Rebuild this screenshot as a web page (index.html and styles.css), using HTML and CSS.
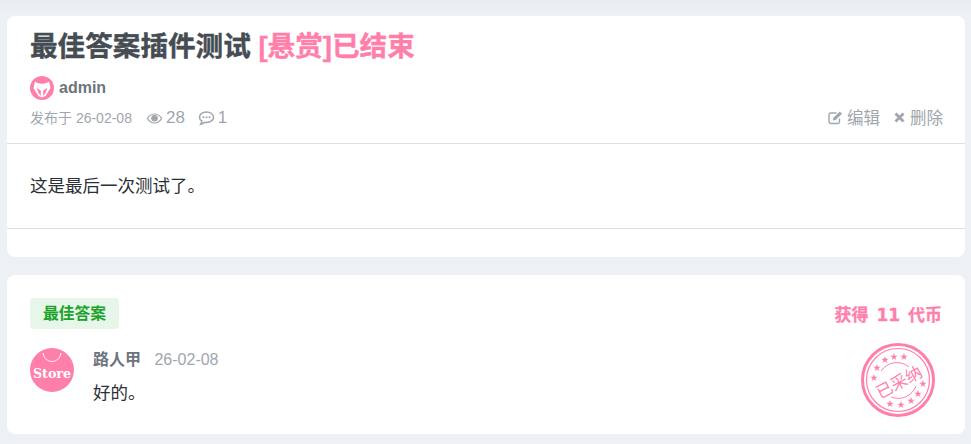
FILE: index.html
```html
<!DOCTYPE html>
<html lang="zh-CN">
<head>
    <meta charset="UTF-8">
    <meta name="viewport" content="width=device-width, initial-scale=1.0">
    <title>最佳答案插件测试</title>
    <link rel="stylesheet" href="styles.css">
</head>
<body>
    <div class="card post">
        <div class="post-head">
            <h1 class="post-title">最佳答案插件测试 <span class="pink">[悬赏]已结束</span></h1>
            <div class="author">
                <svg class="avatar-small" viewBox="0 0 24 24">
                    <circle cx="12" cy="12" r="12" fill="#ff7fab"/>
                    <path d="M5 5.500C8 8.500 16 8.500 19 5.500L20.500 12 15.500 20 12 21.500 8.500 20 3.500 12z" fill="#fff"/>
                    <path d="M6.500 12L10.800 14.500V20L8.800 17.500zM17.500 12L13.200 14.500V20L15.200 17.500z" fill="#ff7fab"/>
                </svg>
                <span class="author-name">admin</span>
            </div>
            <div class="meta">
                <div class="meta-left">
                    <span class="date">发布于 26-02-08</span>
                    <span class="stat">
                        <svg class="icon icon-eye" viewBox="0 0 18 12">
                            <path d="M9 .5C5 .5 2 3 .5 6 2 9 5 11.500 9 11.500S16 9 17.500 6C16 3 13 .5 9 .5zm0 1.200c3 0 5.500 1.800 7 4.300-1.500 2.500-4 4.300-7 4.300S3.500 8.500 2 6c1.500-2.500 4-4.300 7-4.300z" fill="#a0a6ae"/>
                            <circle cx="9" cy="5.800" r="3.600" fill="#a0a6ae"/>
                        </svg>28
                    </span>
                    <span class="stat">
                        <svg class="icon icon-chat" viewBox="0 0 16 15">
                            <path d="M8 1C4.100 1 1 3.200 1 6.200c0 1.700 1 3.100 2.500 4-.2 1-.7 2-1.300 3 1.500-.3 3-1 4-2 .6.100 1.200.200 1.800.200 3.900 0 7-2.300 7-5.200S11.900 1 8 1z" fill="none" stroke="#a0a6ae" stroke-width="1.500"/>
                            <circle cx="5" cy="6.200" r="1" fill="#a0a6ae"/>
                            <circle cx="8" cy="6.200" r="1" fill="#a0a6ae"/>
                            <circle cx="11" cy="6.200" r="1" fill="#a0a6ae"/>
                        </svg>1
                    </span>
                </div>
                <div class="meta-right">
                    <a class="action">
                        <svg class="icon icon-edit" viewBox="0 0 16 15">
                            <path d="M12 8.500v3.300A1.700 1.700 0 0 1 10.300 13.500H3.200A1.700 1.700 0 0 1 1.500 11.800V4.700A1.700 1.700 0 0 1 3.200 3H9" fill="none" stroke="#a0a6ae" stroke-width="1.400"/>
                            <path d="M6 7.800L12.300 1.500l2.200 2.200-6.300 6.300-2.800.6z" fill="#a0a6ae"/>
                        </svg>编辑
                    </a>
                    <a class="action">
                        <svg class="icon icon-close" viewBox="0 0 11 11">
                            <path d="M1.500 1.500l8 8m0-8l-8 8" stroke="#a0a6ae" stroke-width="2.800" fill="none"/>
                        </svg>删除
                    </a>
                </div>
            </div>
        </div>
        <div class="post-body">这是最后一次测试了。</div>
        <div class="post-foot"></div>
    </div>

    <div class="card answer">
        <div class="answer-top">
            <span class="best-tag">最佳答案</span>
            <span class="reward">获得 11 代币</span>
        </div>
        <div class="answer-row">
            <svg class="avatar" viewBox="0 0 44 44">
                <circle cx="22" cy="22" r="22" fill="#ff7fab"/>
                <path d="M13 5c1 5 4.500 8.500 9 8.500s8-3.500 9-8.500" fill="none" stroke="#ffe6ee" stroke-width="1.200"/>
                <text class="avatar-text" x="22" y="30" text-anchor="middle">Store</text>
            </svg>
            <div class="answer-main">
                <div class="answer-info">
                    <span class="answer-name">路人甲</span>
                    <span class="answer-date">26-02-08</span>
                </div>
                <div class="answer-text">好的。</div>
            </div>
            <svg class="stamp" viewBox="0 0 74 74">
                <circle cx="37" cy="37" r="35.500" fill="none" stroke="#ff7fab" stroke-width="3"/>
                <circle cx="37" cy="37" r="31.500" fill="none" stroke="#ff7fab" stroke-width="1.200"/>
                <path d="M20 28A19 19 0 0 1 48 24M55 43A19 19 0 0 1 30 54" fill="none" stroke="#ff7fab" stroke-width="1"/>
                <g class="stamp-stars" text-anchor="middle">
                    <text x="13" y="37">★</text>
                    <text x="16" y="27">★</text>
                    <text x="24" y="19">★</text>
                    <text x="33" y="16">★</text>
                    <text x="43" y="16">★</text>
                    <text x="62" y="43">★</text>
                    <text x="57" y="53">★</text>
                    <text x="50" y="60">★</text>
                    <text x="40" y="64">★</text>
                    <text x="29" y="63">★</text>
                </g>
                <text class="stamp-text" x="38" y="45" text-anchor="middle" transform="rotate(-28 38 39)">已采纳</text>
            </svg>
        </div>
    </div>
</body>
</html>
```

FILE: styles.css
```css
body {
    margin: 0;
    padding: 16px 6px 10px 7px;
    background: linear-gradient(#e9ecf0, #edf0f5 16px);
    font-family: "Liberation Sans", "Noto Sans CJK SC", sans-serif;
}

.card {
    background: #ffffff;
    border-radius: 8px;
}

.post {
    height: 241px;
    margin-bottom: 18px;
    display: flex;
    flex-direction: column;
}

.post-head {
    height: 127px;
    padding: 0 22px 0 23px;
    border-bottom: 1px solid #dee0e3;
}

.post-title {
    margin: 0;
    padding-top: 12px;
    font-size: 27.6px;
    line-height: 38px;
    font-weight: bold;
    color: #454c53;
    -webkit-text-stroke: 0.4px;
}

.pink {
    color: #ff7fab;
}

.author {
    display: flex;
    align-items: center;
    margin-top: 10px;
    height: 24px;
}

.avatar-small {
    width: 24px;
    height: 24px;
    margin-right: 5px;
}

.author-name {
    font-size: 16px;
    font-weight: bold;
    color: #6c757d;
}

.meta {
    display: flex;
    justify-content: space-between;
    align-items: center;
    margin-top: 5px;
    height: 24px;
    color: #a0a6ae;
    font-size: 16.5px;
}

.meta-left, .meta-right {
    display: flex;
    align-items: center;
}

.date {
    font-size: 14px;
    margin-right: 14px;
}

.stat {
    display: flex;
    align-items: center;
    margin-right: 13px;
    font-size: 17px;
    padding-top: 2px;
}

.action {
    display: flex;
    align-items: center;
    margin-left: 14px;
}

.icon {
    margin-right: 3px;
}

.icon-eye {
    width: 17px;
    height: 11px;
}

.icon-chat {
    width: 17px;
    height: 15px;
}

.icon-edit {
    width: 17px;
    height: 15px;
}

.icon-close {
    width: 11px;
    height: 11px;
    margin-right: 5px;
}

.post-body {
    height: 84px;
    padding: 0 23px;
    font-size: 17.5px;
    line-height: 84px;
    color: #2b3035;
    border-bottom: 1px solid #dee0e3;
}

.answer {
    height: 159px;
    padding: 0 23px;
}

.answer-top {
    display: flex;
    justify-content: space-between;
    align-items: center;
    padding-top: 23px;
}

.best-tag {
    background: #e6f6e8;
    color: #1aa32a;
    font-size: 15.75px;
    font-weight: bold;
    line-height: 31px;
    padding: 0 13px;
    border-radius: 4px;
}

.reward {
    color: #ff7fab;
    font-family: "DejaVu Sans", "Noto Sans CJK SC", sans-serif;
    font-size: 17px;
    font-weight: bold;
    word-spacing: 2px;
    -webkit-text-stroke: 0.3px;
}

.answer-row {
    display: flex;
    align-items: flex-start;
    margin-top: 19px;
}

.avatar {
    width: 44px;
    height: 44px;
    margin-right: 19px;
}

.avatar-text {
    font-family: "DejaVu Serif", serif;
    font-size: 12.7px;
    font-weight: bold;
    fill: #ffffff;
}

.answer-main {
    flex: 1;
}

.answer-info {
    line-height: 24px;
    font-size: 16px;
    margin-bottom: 6px;
}

.answer-name {
    font-weight: bold;
    color: #6c757d;
    margin-right: 9px;
}

.answer-date {
    color: #a0a6ae;
}

.answer-text {
    font-size: 17.5px;
    line-height: 30px;
    color: #2b3035;
}

.stamp {
    width: 74px;
    height: 74px;
    margin-top: -5px;
    margin-right: 7px;
}

.stamp-stars {
    font-size: 8px;
    fill: #ff7fab;
}

.stamp-text {
    font-size: 16.5px;
    fill: #ff7fab;
}
```
